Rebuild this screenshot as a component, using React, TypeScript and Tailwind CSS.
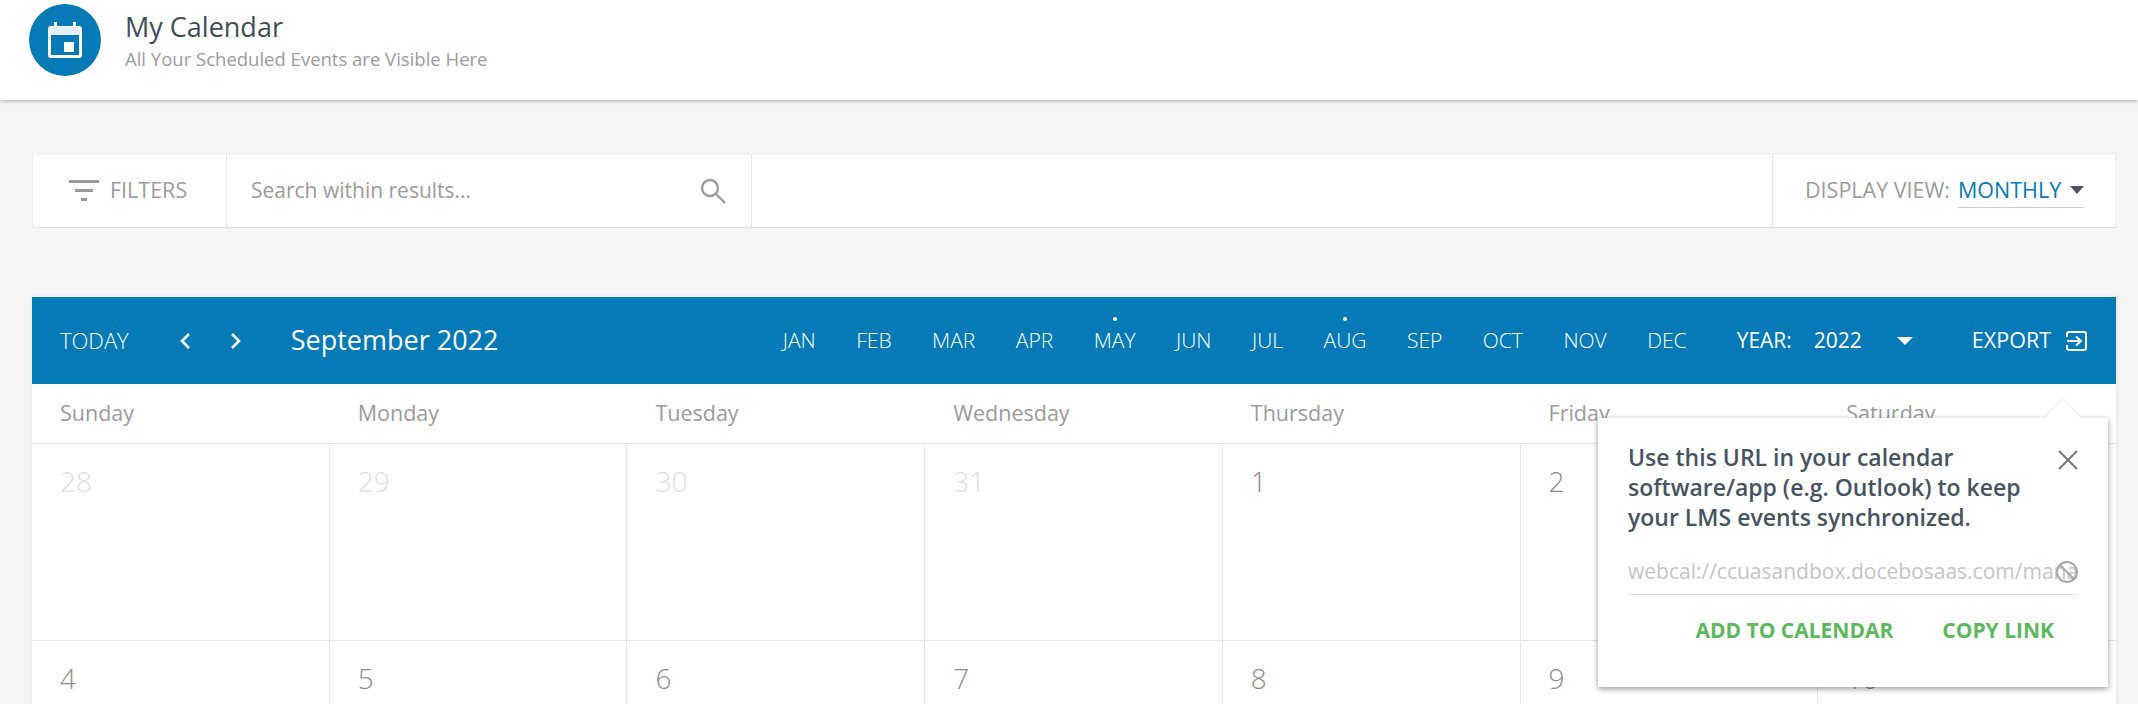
import React from 'react';

const MONTHS = ['JAN', 'FEB', 'MAR', 'APR', 'MAY', 'JUN', 'JUL', 'AUG', 'SEP', 'OCT', 'NOV', 'DEC'];
const DAYS = ['Sunday', 'Monday', 'Tuesday', 'Wednesday', 'Thursday', 'Friday', 'Saturday'];
const WEEK_ONE = ['28', '29', '30', '31', '1', '2', '3'];
const WEEK_TWO = ['4', '5', '6', '7', '8', '9', '10'];

const CalendarIcon = () => (
  <svg width="34" height="36" viewBox="0 0 34 36">
    <path d="M6 0h3v4h16V0h3v4h3a3 3 0 0 1 3 3v26a3 3 0 0 1-3 3H3a3 3 0 0 1-3-3V7a3 3 0 0 1 3-3h3z" fill="#fff" />
    <rect x="3" y="5" width="28" height="8" fill="#e3f0f8" />
    <rect x="3" y="13" width="28" height="20" fill="#057ab6" />
    <rect x="16" y="20" width="10" height="10" fill="#fff" />
  </svg>
);

const FilterIcon = () => (
  <svg width="30" height="22" viewBox="0 0 30 22" fill="#9b9b9b">
    <rect x="0" y="0" width="30" height="3" />
    <rect x="6" y="9" width="18" height="3" />
    <rect x="12" y="18" width="6" height="3" />
  </svg>
);

const SearchIcon = () => (
  <svg width="26" height="26" viewBox="0 0 26 26" fill="none" stroke="#9b9b9b" strokeWidth="2.4">
    <circle cx="10" cy="10" r="8" />
    <path d="M16 16l9 9" />
  </svg>
);

const ExportIcon = () => (
  <svg width="21" height="20" viewBox="0 0 21 20" fill="none" stroke="#fff" strokeWidth="2">
    <path d="M1 6V3a2 2 0 0 1 2-2h15a2 2 0 0 1 2 2v14a2 2 0 0 1-2 2H3a2 2 0 0 1-2-2v-3" />
    <path d="M1 10h13M10 5.500l5 4.500-5 4.500" />
  </svg>
);

const Chevron = ({ flip }: { flip?: boolean }) => (
  <svg width="12" height="18" viewBox="0 0 12 18" fill="none" stroke="#fff" strokeWidth="2.6">
    <path d={flip ? 'M2 2l7 7-7 7' : 'M10 2L3 9l7 7'} />
  </svg>
);

export default function App() {
  return (
    <div className="h-[704px] overflow-hidden bg-[#f5f5f5] font-['Open_Sans','Noto_Sans',sans-serif]">
      <header className="relative z-10 flex h-[100px] items-start bg-white pl-[29px] pt-1 shadow-[0_1px_4px_rgba(0,0,0,0.3)]">
        <div className="flex h-[72px] w-[72px] items-center justify-center rounded-full bg-[#057ab6]">
          <CalendarIcon />
        </div>
        <div className="ml-6 pt-[5px]">
          <h1 className="text-[27px] leading-9 text-[#3e4c59]">My Calendar</h1>
          <p className="text-[18.500px] leading-[27px] text-[#9b9b9b]">All Your Scheduled Events are Visible Here</p>
        </div>
      </header>

      <main className="pt-[53px] pr-[22px] pl-8">
        <section className="flex h-[75px] border border-[#ececec] border-b-[#e0e0e0] bg-white text-[#9b9b9b]">
          <div className="flex w-[194px] items-center border-r border-[#e6e6e6] pl-9">
            <FilterIcon />
            <span className="ml-[11px] text-[21.500px] font-medium">FILTERS</span>
          </div>
          <div className="flex w-[525px] items-center justify-between border-r border-[#e6e6e6] pr-[25px] pl-6">
            <span className="text-[21px]">Search within results...</span>
            <SearchIcon />
          </div>
          <div className="flex-1" />
          <div className="flex w-[343px] items-center border-l border-[#e6e6e6] pl-8">
            <span className="text-[21.500px] font-medium">DISPLAY VIEW:</span>
            <div className="ml-2 flex h-[34px] w-[126px] items-center justify-between border-b border-[#cfcfcf]">
              <span className="text-[21.500px] text-[#057ab6]">MONTHLY</span>
              <span className="h-0 w-0 border-x-[7px] border-t-[8px] border-x-transparent border-t-[#4d5660]" />
            </div>
          </div>
        </section>

        <section className="relative mt-[69px] bg-white shadow-[0_0_6px_rgba(0,0,0,0.08)]">
          <div className="flex h-[87px] items-center bg-[#057ab6] text-white">
            <span className="ml-7 text-[22px] font-light">TODAY</span>
            <div className="ml-[50px] flex gap-[39px]">
              <Chevron />
              <Chevron flip />
            </div>
            <span className="ml-[49px] text-[27px]">September 2022</span>
            <nav className="ml-auto flex gap-[40.500px] text-[21px] font-light">
              {MONTHS.map((month) => (
                <span key={month} className="relative">
                  {month}
                  {(month === 'MAY' || month === 'AUG') && (
                    <span className="absolute -top-[8px] left-1/2 h-1 w-1 -translate-x-1/2 rounded-full bg-white" />
                  )}
                </span>
              ))}
            </nav>
            <span className="ml-[50px] text-[21px] font-medium">YEAR:</span>
            <span className="ml-[22px] text-[21px]">2022</span>
            <span className="ml-[35px] h-0 w-0 border-x-[8px] border-t-[8px] border-x-transparent border-t-white" />
            <span className="ml-[59px] text-[21.500px] font-medium">EXPORT</span>
            <span className="mr-[29px] ml-[15px]">
              <ExportIcon />
            </span>
          </div>

          <div className="grid h-[60px] grid-cols-7 border-b border-[#e4e4e4]">
            {DAYS.map((day) => (
              <div key={day} className="flex items-center pl-7 text-[21.500px] font-medium text-[#9b9b9b]">
                {day}
              </div>
            ))}
          </div>

          <div className="grid h-[197px] grid-cols-7 border-b border-[#e4e4e4]">
            {WEEK_ONE.map((date, i) => (
              <div
                key={date}
                className={`border-r border-[#e4e4e4] pt-4 pl-7 text-[28px] font-light last:border-r-0 ${i < 4 ? 'text-[#dedede]' : 'text-[#8c8c8c]'}`}
              >
                {date}
              </div>
            ))}
          </div>
          <div className="grid h-[197px] grid-cols-7">
            {WEEK_TWO.map((date) => (
              <div key={date} className="border-r border-[#e4e4e4] pt-4 pl-7 text-[28px] font-light text-[#8c8c8c] last:border-r-0">
                {date}
              </div>
            ))}
          </div>

          <div className="absolute top-[121px] right-[8px] h-[269px] w-[510px] bg-white px-[30px] pt-6 shadow-[0_2px_6px_rgba(0,0,0,0.4)]">
            <span className="absolute -top-[13px] right-[32px] h-[26px] w-[26px] rotate-45 bg-white shadow-[-1px_-1px_2px_rgba(0,0,0,0.08)]" />
            <div className="relative flex justify-between">
              <p className="w-[420px] text-[23px] leading-[30px] font-semibold text-[#465360]">
                Use this URL in your calendar software/app (e.g. Outlook) to keep your LMS events synchronized.
              </p>
              <svg className="mt-2" width="20" height="20" viewBox="0 0 20 20" fill="none" stroke="#7d7d7d" strokeWidth="2.2">
                <path d="M1 1l18 18M19 1L1 19" />
              </svg>
            </div>
            <div className="relative mt-[21px] flex h-[42px] items-center overflow-hidden border-b border-[#e0e0e0] pb-1 text-[21px] whitespace-nowrap text-[#c4c4c4]">
              webcal://ccuasandbox.docebosaas.com/manage
              <svg className="absolute top-[8px] right-0" width="22" height="22" viewBox="0 0 22 22" fill="none" stroke="#a8a8a8" strokeWidth="2">
                <circle cx="11" cy="11" r="10" />
                <path d="M4 4l14 14" />
              </svg>
            </div>
            <div className="mt-[20px] flex justify-end gap-[49px] pr-6 text-[21px] font-bold text-[#5cb85c]">
              <span>ADD TO CALENDAR</span>
              <span>COPY LINK</span>
            </div>
          </div>
        </section>
      </main>
    </div>
  );
}
